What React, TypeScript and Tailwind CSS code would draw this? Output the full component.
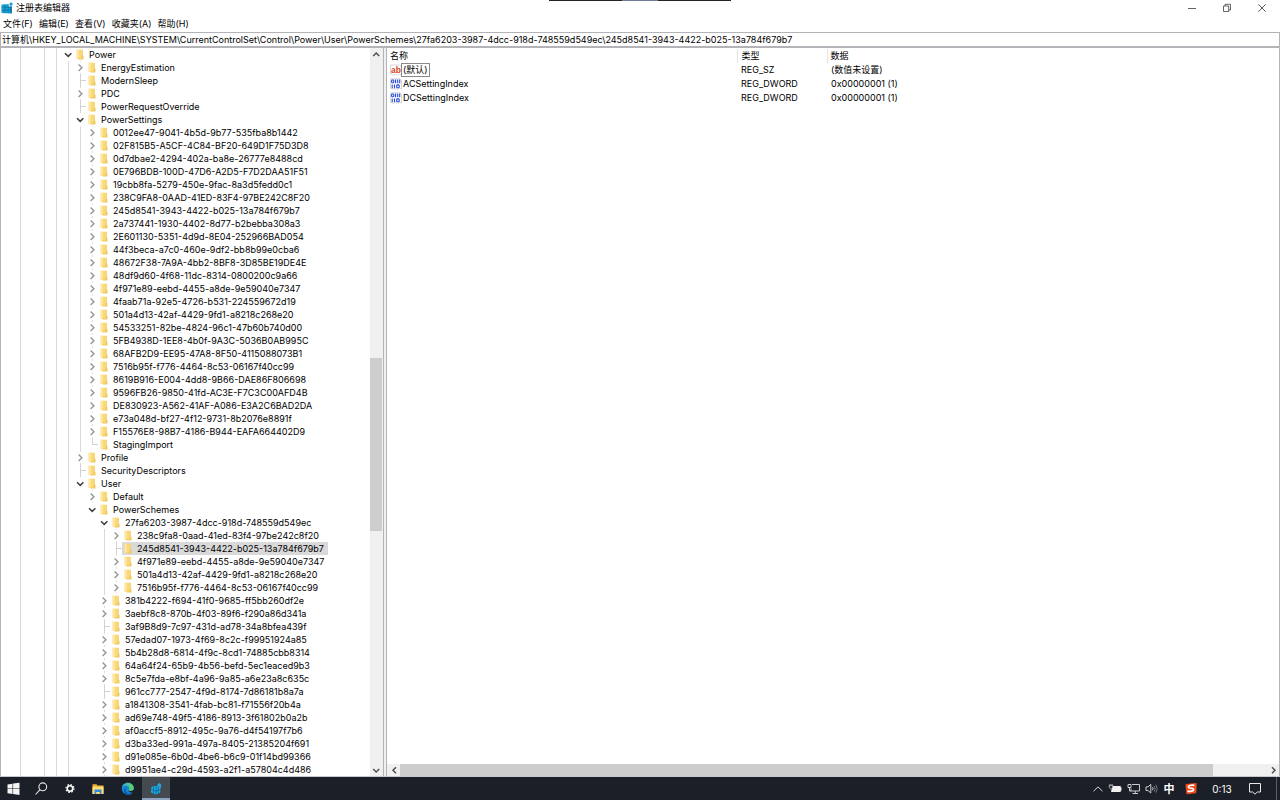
import React from "react";

type Kind = "open" | "closed" | "tee" | "end";
type Row = { depth: number; kind: Kind; name: string; selected?: boolean };

const row = (depth: number, kind: Kind, name: string, selected = false): Row => ({ depth, kind, name, selected });

const settings = [
  "0012ee47-9041-4b5d-9b77-535fba8b1442",
  "02F815B5-A5CF-4C84-BF20-649D1F75D3D8",
  "0d7dbae2-4294-402a-ba8e-26777e8488cd",
  "0E796BDB-100D-47D6-A2D5-F7D2DAA51F51",
  "19cbb8fa-5279-450e-9fac-8a3d5fedd0c1",
  "238C9FA8-0AAD-41ED-83F4-97BE242C8F20",
  "245d8541-3943-4422-b025-13a784f679b7",
  "2a737441-1930-4402-8d77-b2bebba308a3",
  "2E601130-5351-4d9d-8E04-252966BAD054",
  "44f3beca-a7c0-460e-9df2-bb8b99e0cba6",
  "48672F38-7A9A-4bb2-8BF8-3D85BE19DE4E",
  "48df9d60-4f68-11dc-8314-0800200c9a66",
  "4f971e89-eebd-4455-a8de-9e59040e7347",
  "4faab71a-92e5-4726-b531-224559672d19",
  "501a4d13-42af-4429-9fd1-a8218c268e20",
  "54533251-82be-4824-96c1-47b60b740d00",
  "5FB4938D-1EE8-4b0f-9A3C-5036B0AB995C",
  "68AFB2D9-EE95-47A8-8F50-4115088073B1",
  "7516b95f-f776-4464-8c53-06167f40cc99",
  "8619B916-E004-4dd8-9B66-DAE86F806698",
  "9596FB26-9850-41fd-AC3E-F7C3C00AFD4B",
  "DE830923-A562-41AF-A086-E3A2C6BAD2DA",
  "e73a048d-bf27-4f12-9731-8b2076e8891f",
  "F15576E8-98B7-4186-B944-EAFA664402D9",
];

const rows: Row[] = [
  row(4, "open", "Power"),
  row(5, "closed", "EnergyEstimation"),
  row(5, "tee", "ModernSleep"),
  row(5, "closed", "PDC"),
  row(5, "tee", "PowerRequestOverride"),
  row(5, "open", "PowerSettings"),
  ...settings.map((name) => row(6, "closed", name)),
  row(6, "end", "StagingImport"),
  row(5, "closed", "Profile"),
  row(5, "tee", "SecurityDescriptors"),
  row(5, "open", "User"),
  row(6, "closed", "Default"),
  row(6, "open", "PowerSchemes"),
  row(7, "open", "27fa6203-3987-4dcc-918d-748559d549ec"),
  row(8, "closed", "238c9fa8-0aad-41ed-83f4-97be242c8f20"),
  row(8, "tee", "245d8541-3943-4422-b025-13a784f679b7", true),
  row(8, "closed", "4f971e89-eebd-4455-a8de-9e59040e7347"),
  row(8, "closed", "501a4d13-42af-4429-9fd1-a8218c268e20"),
  row(8, "closed", "7516b95f-f776-4464-8c53-06167f40cc99"),
  row(7, "closed", "381b4222-f694-41f0-9685-ff5bb260df2e"),
  row(7, "closed", "3aebf8c8-870b-4f03-89f6-f290a86d341a"),
  row(7, "tee", "3af9B8d9-7c97-431d-ad78-34a8bfea439f"),
  row(7, "closed", "57edad07-1973-4f69-8c2c-f99951924a85"),
  row(7, "closed", "5b4b28d8-6814-4f9c-8cd1-74885cbb8314"),
  row(7, "closed", "64a64f24-65b9-4b56-befd-5ec1eaced9b3"),
  row(7, "closed", "8c5e7fda-e8bf-4a96-9a85-a6e23a8c635c"),
  row(7, "tee", "961cc777-2547-4f9d-8174-7d86181b8a7a"),
  row(7, "closed", "a1841308-3541-4fab-bc81-f71556f20b4a"),
  row(7, "closed", "ad69e748-49f5-4186-8913-3f61802b0a2b"),
  row(7, "closed", "af0accf5-8912-495c-9a76-d4f54197f7b6"),
  row(7, "closed", "d3ba33ed-991a-497a-8405-21385204f691"),
  row(7, "closed", "d91e085e-6b0d-4be6-b6c9-01f14bd99366"),
  row(7, "closed", "d9951ae4-c29d-4593-a2f1-a57804c4d486"),
];

const userIndex = rows.findIndex((r) => r.name === "User");

// Depths whose branch continues past the given row.
function hasGuide(depth: number, index: number) {
  if (depth === 1) return false;
  if (depth < 5) return true;
  if (depth === 5) return index < userIndex;
  return depth === 7;
}

function Expander({ kind }: { kind: Kind }) {
  if (kind === "tee" || kind === "end")
    return (
      <span aria-hidden="true" className="block h-[13px] w-3">
        <svg viewBox="0 0 12 13" className="block h-[13px] w-3" fill="none" stroke="#d2d2d2" shapeRendering="crispEdges">
          <path d={kind === "tee" ? "M6.5 0v13M7 6.5h5" : "M6.5 0v7M7 6.5h5"} />
        </svg>
      </span>
    );
  return (
    <button type="button" aria-label={kind === "open" ? "折叠" : "展开"} className="block h-[13px] w-3">
      <svg viewBox="0 0 12 13" className="block h-[13px] w-3" fill="none">
        {kind === "open" ? (
          <path d="M3 5.2l3.2 3.2 3.2-3.2" stroke="#404040" strokeWidth="1.5" />
        ) : (
          <>
            <path d="M6.5 0v1M6.5 12v1" stroke="#dedede" />
            <path d="M4.6 3.6l3.3 3.2-3.3 3.2" stroke="#969696" strokeWidth="1.4" />
          </>
        )}
      </svg>
    </button>
  );
}

function Folder() {
  return (
    <svg viewBox="0 0 12 13" className="block h-[13px] w-3 shrink-0">
      <path d="M2.6 1.7h6V11h-6z" fill="#f9d978" />
      <path d="M2.6 1.7h2V11l-2-.7z" fill="#ffe9a8" />
      <path d="M7.6 7.8h1.9v3.6H4.6v-.8h3z" fill="#efc85e" />
      <path d="M8.4 2v5.8" stroke="#ecc560" strokeWidth=".6" />
    </svg>
  );
}

function TreeRow({ item, index }: { item: Row; index: number }) {
  return (
    <li role="treeitem" aria-selected={item.selected} aria-level={item.depth + 1} className="flex h-[13px] shrink-0">
      {Array.from({ length: item.depth }, (_, d) => (
        <span key={d} className="flex w-3 shrink-0 pl-[6px]">
          {hasGuide(d, index) && <span className="w-px bg-[#d9d9d9]" />}
        </span>
      ))}
      <Expander kind={item.kind} />
      <span className={item.selected ? "flex bg-[#d9d9d9] pr-1" : "flex pr-1"}>
        <Folder />
        <span className="pl-[3px] leading-[13px] whitespace-nowrap">{item.name}</span>
      </span>
    </li>
  );
}

function Arrow({ dir, label }: { dir: "up" | "down" | "left" | "right"; label: string }) {
  const paths = {
    up: "M3.2 8l3-3 3 3",
    down: "M3.2 5l3 3 3-3",
    left: "M8 3.3l-3 3 3 3",
    right: "M5 3.3l3 3-3 3",
  };
  return (
    <button type="button" aria-label={label} className="block size-3 shrink-0">
      <svg viewBox="0 0 12 12" className="block size-3" fill="none" stroke="#505050" strokeWidth="1.5">
        <path d={paths[dir]} />
      </svg>
    </button>
  );
}

function RegIcon() {
  return (
    <svg viewBox="0 0 12 12" className="size-3 shrink-0">
      <path d="M.5 2.5l7-.3v2.3h3v7L.5 11z" fill="#16a0d4" />
      <path d="M.5 5.3h10M.5 8.2h10M3.8 2.4v8.8M7.2 2.2v9" stroke="#0b6b9c" strokeWidth=".6" />
      <path d="M10.8 4.5v7l-1.5-.4V4.5z" fill="#0b6fa3" />
      <path d="M9.8.2l2 1.2-.6 2.2-2.1.2-.9-1.7z" fill="#1c9fd8" />
    </svg>
  );
}

function TextValueIcon() {
  return (
    <svg viewBox="0 0 12 12" className="size-3 shrink-0">
      <path d="M.6 1h8.9l2 2v8l-2-.8-2 .9-2-.9-2 .9L.6 10z" fill="#fff" stroke="#c4c4c4" strokeWidth=".7" />
      <text x="1" y="8.5" fontSize="8.5" fontWeight="700" fontFamily="Liberation Sans, sans-serif" fill="#dc4422">
        ab
      </text>
    </svg>
  );
}

function BinaryIcon() {
  return (
    <svg viewBox="0 0 12 12" className="size-3 shrink-0">
      <path d="M.6.8h9.2l1.7 2V11l-2-.6-2 .8-2-.8-2 .8-2.9-.8z" fill="#fff" stroke="#c4c4c4" strokeWidth=".7" />
      <g fill="none" stroke="#2547e0" strokeWidth="1.1">
        <rect x="1.6" y="2" width="2.2" height="2.8" rx=".8" />
        <path d="M5.6 1.5v3.8M7.7 1.5v3.8M9.7 1.5v3.8M2.2 6.4v3.8M4.5 6.4v3.8" />
        <rect x="6.7" y="6.9" width="2.5" height="2.8" rx=".8" />
      </g>
    </svg>
  );
}

function WindowControls() {
  return (
    <div className="flex pr-px">
      <button type="button" aria-label="最小化" className="flex h-4 w-[35px] items-center justify-center">
        <svg viewBox="0 0 10 10" className="size-[10px]" stroke="#555"><path d="M1 5.5h8" strokeWidth=".9" /></svg>
      </button>
      <button type="button" aria-label="还原" className="flex h-4 w-[35px] items-center justify-center">
        <svg viewBox="0 0 10 10" className="size-[10px]" fill="none" stroke="#555" strokeWidth=".9">
          <path d="M1.5 3h5.2v5.5H1.5zM3 3V1.3h5.5V7H6.7" />
        </svg>
      </button>
      <button type="button" aria-label="关闭" className="flex h-4 w-[35px] items-center justify-center">
        <svg viewBox="0 0 10 10" className="size-[10px]" stroke="#444" strokeWidth=".9"><path d="M1.3 1.3l7.4 7.4M8.7 1.3L1.3 8.7" /></svg>
      </button>
    </div>
  );
}

const values = [
  { name: "(默认)", type: "REG_SZ", data: "(数值未设置)", text: true },
  { name: "ACSettingIndex", type: "REG_DWORD", data: "0x00000001 (1)", text: false },
  { name: "DCSettingIndex", type: "REG_DWORD", data: "0x00000001 (1)", text: false },
];

function TaskButton({ label, active = false, children }: { label: string; active?: boolean; children: React.ReactNode }) {
  return (
    <button
      type="button"
      aria-label={label}
      className={
        active
          ? "flex h-full w-7 items-center justify-center border-b-2 border-[#8ea3c4] bg-[#454a51] pt-0.5"
          : "flex h-full w-7 items-center justify-center"
      }
    >
      {children}
    </button>
  );
}

function Taskbar() {
  return (
    <footer className="flex h-[23px] shrink-0 items-center justify-between bg-[#1b1f27] text-white">
      <div className="flex h-full">
        <TaskButton label="开始">
          <svg viewBox="0 0 14 14" className="size-[14px]" fill="#f4f4f4">
            <path d="M.5 2.4l5-.7v4.8h-5zM6.1 1.6L12.5.7v5.8H6.1zM.5 7.1h5v4.8l-5-.7zM6.1 7.1h6.4v5.8l-6.4-.9z" />
          </svg>
        </TaskButton>
        <TaskButton label="搜索">
          <svg viewBox="0 0 14 14" className="size-[14px]" fill="none" stroke="#e8e8e8" strokeWidth="1.1">
            <circle cx="7.8" cy="4.8" r="3.9" />
            <path d="M5 7.6L.6 12.5" />
          </svg>
        </TaskButton>
        <TaskButton label="设置">
          <svg viewBox="0 0 12 12" className="size-3" fill="none" stroke="#fff">
            <circle cx="6" cy="5.5" r="2.7" strokeWidth="1.6" />
            <circle cx="6" cy="5.5" r="4" strokeWidth="1.2" strokeDasharray="1.57 1.57" />
          </svg>
        </TaskButton>
        <TaskButton label="文件资源管理器">
          <svg viewBox="0 0 14 14" className="size-[14px]">
            <path d="M1.5 2.2h4l1 1.2h6v8.5h-11z" fill="#e9b22d" />
            <path d="M1.5 4.6h11v7.3h-11z" fill="#ffdc78" />
            <path d="M3.5 7.6h7V12H8.8V9.9H5.2V12H3.5z" fill="#2f8edb" />
          </svg>
        </TaskButton>
        <div className="flex pl-0.5">
          <TaskButton label="Microsoft Edge">
            <svg viewBox="0 0 14 14" className="size-[14px]">
              <defs>
                <linearGradient id="edge-top" x1="0" x2="1">
                  <stop stopColor="#2aa9e0" />
                  <stop offset="1" stopColor="#63d65b" />
                </linearGradient>
              </defs>
              <circle cx="6.8" cy="6.8" r="6" fill="#1583d6" />
              <path d="M.8 6.5C1.1 3 3.6.8 6.8.8c3.6 0 6 2.6 6 5.3 0 1.9-1.5 3-3.3 3-1.2 0-1.9-.4-1.9-.8 0-.5.6-.6.6-1.7C8.2 5.1 6.8 3.8 4.8 3.8 2.8 3.8 1.3 5 .8 6.5z" fill="url(#edge-top)" />
              <path d="M5.3 6.1c-1 1.3-.9 4.4 2 5.3 1.7.5 3.5 0 4.6-1-1.8 3.3-7.5 3.3-8.7-.5-.5-1.8.3-3.4 2.1-3.8z" fill="#0c59a8" />
              <path d="M7.6 8.3c.4.9 3.3 1.3 4.9-.3l1.3.8-1.2 1.4c-1.5.8-5.6.4-5-1.9z" fill="#1b1f27" />
            </svg>
          </TaskButton>
          <TaskButton label="注册表编辑器" active>
            <svg viewBox="0 0 14 14" className="size-[14px]">
              <path d="M2.5 5l3-1.3v.8l3-.7V2.5L10 1l2 1v3l-.7 1.5v4L7 12.5l-5-2.1V7.5z" fill="#23a9df" />
              <path d="M2 7.5l5 1.7 4.3-1.8M4.5 4.5v7M7 4.5v8M9.2 4v7.5" stroke="#0c638e" strokeWidth=".8" fill="none" />
            </svg>
          </TaskButton>
        </div>
      </div>
      <div className="flex h-full items-center">
        <div className="flex items-center gap-1">
          <button type="button" aria-label="显示隐藏的图标">
            <svg viewBox="0 0 14 14" className="block size-[14px]" fill="none" stroke="#d8d8d8"><path d="M3.5 9.2L8 4.9l4.5 4.3" /></svg>
          </button>
          <button type="button" aria-label="电池">
            <svg viewBox="0 0 14 14" className="block size-[14px]">
              <path d="M4 4h8.7v1.5h.8v3h-.8V10H3.2V7.5H4z" fill="#f2f2f2" />
              <path d="M1.3 3.3h3.5v2.3L3.5 6.8h-1L1.3 5.6zM2 3.3V2M4.1 3.3V2" stroke="#ddd" strokeWidth=".7" fill="#2b2f36" />
            </svg>
          </button>
          <button type="button" aria-label="网络">
            <svg viewBox="0 0 14 14" className="block size-[14px]" fill="none" stroke="#dedede" strokeWidth=".9">
              <path d="M6 2.5h7.5V9H5V6.5M9.3 9v2.5M6.5 11.5H12M2 2.5h3v3H2zM3.5 5.5V9H5" />
            </svg>
          </button>
          <button type="button" aria-label="音量">
            <svg viewBox="0 0 14 14" className="block size-[14px]" fill="none" stroke="#e0e0e0" strokeWidth=".9">
              <path d="M2 4.9h2l2.8-2.5V11L4 8.5H2z" />
              <path d="M8.5 5.2q1 1.5 0 3" />
              <path d="M10.2 3.9q1.8 2.8 0 5.6M11.9 2.7q2.6 4 0 8" stroke="#7d8087" />
            </svg>
          </button>
          <button type="button" className="w-[14px] text-center text-[11px] leading-[14px] font-bold">中</button>
        </div>
        <button type="button" aria-label="搜狗输入法" className="ml-2">
          <svg viewBox="0 0 14 14" className="block size-[14px]">
            <path d="M2.3 2.1L11.8.9q.9 0 .9.8l-.4 8.5q0 1-.9 1.1l-8 .9q-1 0-1.1-.9L1.5 3.1q0-.9.8-1z" fill="#ee4a1c" />
            <path d="M10.3 3.4C7 2.8 4 3.7 4.4 5.2c.4 1.4 5.3.7 5.2 2.4-.1 1.5-3.2 2-6.1 1.5" fill="none" stroke="#fff" strokeWidth="1.7" />
          </svg>
        </button>
        <time className="w-12 text-center text-[10px] leading-[14px]">0:13</time>
        <button type="button" aria-label="通知" className="ml-0.5">
          <svg viewBox="0 0 14 14" className="block size-[14px]" fill="none" stroke="#e8e8e8"><path d="M1.5 1.5h11V10H9.3L7 12.2 4.7 10H1.5z" /></svg>
        </button>
        <span className="mr-[3px] ml-[14px] h-full w-px bg-[#5a5e65]" />
      </div>
    </footer>
  );
}

export default function App() {
  return (
    <div className="flex h-screen flex-col overflow-hidden bg-white font-['Inter','Noto_Sans_CJK_SC',sans-serif] text-[9px] leading-[14px] text-black">
      <header className="relative flex h-4 shrink-0 items-center justify-between">
        <div className="flex items-center gap-[3px] pl-px">
          <RegIcon />
          <h1>注册表编辑器</h1>
        </div>
        <div className="absolute top-0 left-1/2 flex h-px w-[182px] -translate-x-1/2 justify-center bg-[#222]">
          <span className="w-9 bg-[#6f7b98]" />
        </div>
        <WindowControls />
      </header>
      <nav className="flex h-4 shrink-0 items-center gap-[6px] pl-[3px]">
        {["文件(F)", "编辑(E)", "查看(V)", "收藏夹(A)", "帮助(H)"].map((m) => (
          <button key={m} type="button" className="leading-[14px] whitespace-nowrap">{m}</button>
        ))}
      </nav>
      <input
        aria-label="地址"
        className="h-4 w-full shrink-0 border border-b-2 border-[#b4b4b8] pl-px leading-[13px] outline-none"
        defaultValue="计算机\HKEY_LOCAL_MACHINE\SYSTEM\CurrentControlSet\Control\Power\User\PowerSchemes\27fa6203-3987-4dcc-918d-748559d549ec\245d8541-3943-4422-b025-13a784f679b7"
      />
      <main className="flex min-h-0 flex-1 border-b border-[#c8c8cc]">
        <section aria-label="注册表项" className="flex w-96 shrink-0 border-x border-[#b4b4b8]">
          <ul role="tree" className="flex min-w-0 flex-1 flex-col overflow-hidden pl-[13px]">
            {rows.map((r, i) => (
              <TreeRow key={i} item={r} index={i} />
            ))}
          </ul>
          <div className="flex w-[13px] shrink-0 flex-col bg-[#f0f0f0] pr-px">
            <Arrow dir="up" label="向上滚动" />
            <div className="flex flex-1 flex-col">
              <span className="flex-[298]" />
              <span className="flex-[173] bg-[#cdcdcd]" />
              <span className="flex-[233]" />
            </div>
            <Arrow dir="down" label="向下滚动" />
          </div>
        </section>
        <div className="w-0.5 shrink-0 bg-[#f0f0f0]" />
        <section aria-label="值" className="flex min-w-0 flex-1 flex-col justify-between border-x border-[#b4b4b8]">
          <table className="mt-px w-full table-fixed border-collapse text-left">
            <thead>
              <tr className="h-[14px]">
                <th className="w-[350px] border-r border-[#e5e5e5] p-0 pl-[3px] font-normal">名称</th>
                <th className="w-[90px] border-r border-[#e5e5e5] p-0 pl-1 font-normal">类型</th>
                <th className="p-0 pl-[3px] font-normal">数据</th>
              </tr>
            </thead>
            <tbody>
              {values.map((v) => (
                <tr key={v.name} className="h-[14px]">
                  <td className="p-0 pl-[3px]">
                    <div className="flex h-[14px] items-center">
                      {v.text ? <TextValueIcon /> : <BinaryIcon />}
                      <span className={v.text ? "px-px leading-[12px] outline outline-[#8a8a8a]" : "px-px leading-[12px]"}>{v.name}</span>
                    </div>
                  </td>
                  <td className="p-0 pl-1">{v.type}</td>
                  <td className="p-0 pl-1">{v.data}</td>
                </tr>
              ))}
            </tbody>
          </table>
          <div className="flex h-3 shrink-0 bg-[#f0f0f0] pl-px">
            <Arrow dir="left" label="向左滚动" />
            <div className="flex flex-1">
              <span className="flex-[812] bg-[#cdcdcd]" />
              <span className="flex-[54]" />
            </div>
            <Arrow dir="right" label="向右滚动" />
          </div>
        </section>
      </main>
      <Taskbar />
    </div>
  );
}
